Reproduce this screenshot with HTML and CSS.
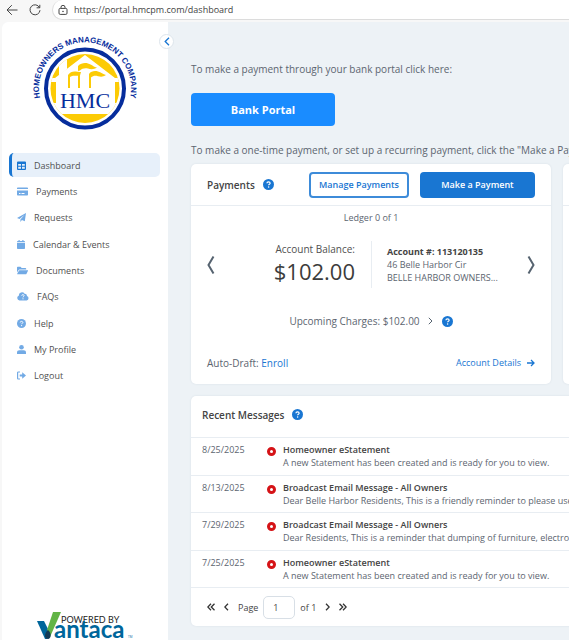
FILE: index.html
```html
<!DOCTYPE html>
<html lang="en">
<head>
    <meta charset="UTF-8">
    <meta name="viewport" content="width=device-width, initial-scale=1.0">
    <title>Dashboard</title>
    <link rel="stylesheet" href="styles.css">
</head>
<body>
    <svg class="symbols" width="0" height="0" aria-hidden="true">
        <symbol id="help" viewBox="0 0 16 16">
            <circle cx="8" cy="8" r="8" fill="currentColor"/>
            <path d="M5.700 6.200c0-1.300 1-2 2.300-2s2.400.8 2.400 2c0 1.500-2.200 1.500-2.200 3" fill="none" stroke="#fff" stroke-width="1.700"/>
            <circle cx="8.200" cy="11.600" r="1.100" fill="#fff"/>
        </symbol>
    </svg>

    <!-- Browser bar -->
    <div class="browser">
        <button class="nav-button" aria-label="Back">
            <svg width="12" height="12" viewBox="0 0 12 12"><path d="M11.500 6H1M5.800 1.200L1 6l4.800 4.800"/></svg>
        </button>
        <button class="nav-button" aria-label="Reload">
            <svg width="12" height="12" viewBox="0 0 12 12"><path d="M10.500 3.600A5 5 0 1 0 11 6.200M10.800.8v3H7.600"/></svg>
        </button>
        <div class="address">
            <svg width="10" height="10" viewBox="0 0 10 10"><rect x="1" y="3.400" width="8" height="6" rx="1.200"/><path d="M3 3.200V2.300a2 2 0 0 1 4 0v.9"/><circle cx="5" cy="6.400" r=".4"/></svg>
            <input type="text" aria-label="Address" value="https://portal.hmcpm.com/dashboard">
        </div>
    </div>

    <div class="layout">
        <!-- Sidebar -->
        <div class="sidebar">
            <button class="collapse" aria-label="Collapse menu">
                <svg width="6" height="9" viewBox="0 0 6 9"><path d="M5 .8L1.200 4.500 5 8.200"/></svg>
            </button>
            <svg class="logo" width="110" height="100" viewBox="0 0 110 100">
                <defs>
                    <path id="arc" d="M11.800 70.200A46 46 0 1 1 98.200 70.200"/>
                    <clipPath id="disc"><circle cx="55" cy="54.500" r="34.500"/></clipPath>
                </defs>
                <text class="logo-arc"><textPath href="#arc" startOffset="50%" text-anchor="middle">HOMEOWNERS MANAGEMENT COMPANY</textPath></text>
                <circle cx="55" cy="54.500" r="39" fill="#fff" stroke="#062d9c" stroke-width="4"/>
                <g clip-path="url(#disc)">
                    <path d="M20 18h70v76H20z" fill="#fccb05"/>
                    <path d="M55 21L25 44h-5v4h6v21h-6v11h70V69h-5V48h5v-4h-5z" fill="#fff"/>
                    <path d="M29 42V18h8v17z" fill="#fff"/>
                </g>
                <g fill="#fccb05">
                    <path d="M38 54V41c2-3 5-4 8-3.500 2 .3 3 .6 5 .5l-1 3.500c-3 1-7-1-10 1.500v11z"/>
                    <path d="M48 37V32c3-3 7-3.500 10-2.500 4 .8 5 3.500 9 4-3 2-6 2-9 1-3-.8-6-.2-8 2z"/>
                    <path d="M48 41h2v13h-2z"/>
                    <path d="M59 54V40c2-3 6-3.500 9-2.500 3 .8 5 3 8 3.500-3 2-5 2-8 1.200-3-.8-5-.4-7 1.300V54z"/>
                </g>
                <text class="logo-name" x="55" y="74" text-anchor="middle">HMC</text>
            </svg>
            <ul class="menu">
                <li><a class="active" href="#">
                    <svg width="9" height="9" viewBox="0 0 9 9"><path fill-rule="evenodd" d="M1 .5h7a1 1 0 0 1 1 1V8a1 1 0 0 1-1 1H1a1 1 0 0 1-1-1V1.500a1 1 0 0 1 1-1zM1.200 3v1.800H4V3zM5 3v1.800h2.800V3zM1.200 5.800v1.900H4V5.800zM5 5.800v1.900h2.800V5.800z"/></svg>
                    Dashboard</a></li>
                <li><a href="#">
                    <svg width="11" height="9" viewBox="0 0 11 9"><path fill-rule="evenodd" d="M.8.500h9.400a.8.8 0 0 1 .8.800V2H0v-.7A.8.800 0 0 1 .8.500zM0 3.500h11v4.300a.8.800 0 0 1-.8.800H.8a.8.800 0 0 1-.8-.8zM2 6v1h1.500V6zM4.500 6v1h3V6z"/></svg>
                    Payments</a></li>
                <li><a href="#">
                    <svg width="9" height="9" viewBox="0 0 9 9"><path d="M9 0L7.800 8.300 4.900 7.100 3.400 9V6.500L7.600 1.800 2.500 6.100 0 5.100z"/></svg>
                    Requests</a></li>
                <li><a href="#">
                    <svg width="8" height="9" viewBox="0 0 8 9"><path d="M1.500 0h1.200v1h2.600V0h1.200v1H7.200a.8.800 0 0 1 .8.800v.5H0v-.5A.8.800 0 0 1 .8 1h.7zM0 2.900h8v5.300a.8.800 0 0 1-.8.800H.8a.8.800 0 0 1-.8-.8z"/></svg>
                    Calendar &amp; Events</a></li>
                <li><a href="#">
                    <svg width="11" height="9" viewBox="0 0 11 9"><path d="M0 1.500A.8.800 0 0 1 .8.700h2.700l1.200 1.200h3.700a.8.800 0 0 1 .8.800v.7H2.500a1 1 0 0 0-.9.500L0 6.500zM2.600 4.200h8.100c.3 0 .4.200.3.500L9.400 7.900a.8.800 0 0 1-.7.400H.5c-.3 0-.4-.2-.3-.5L2 4.500a.7.700 0 0 1 .6-.3z"/></svg>
                    Documents</a></li>
                <li><a href="#">
                    <svg width="12" height="9" viewBox="0 0 12 9"><path d="M2.500 8.500A2.500 2.500 0 0 1 1.800 3.700 3.200 3.200 0 0 1 7.600 1.700a2 2 0 0 1 2.300 2.200 2.400 2.400 0 0 1-.2 4.600z"/><path d="M4.700 3.600c.1-1.300 2.500-1.200 2.400.1 0 .8-1.100.8-1.100 1.700M6 6.300v1" fill="none" stroke="#fff"/></svg>
                    FAQs</a></li>
                <li><a href="#">
                    <svg width="9" height="9"><use href="#help"/></svg>
                    Help</a></li>
                <li><a href="#">
                    <svg width="9" height="9" viewBox="0 0 9 9"><circle cx="4.500" cy="2.300" r="2.300"/><path d="M0 9V7.500C0 6 1 5.300 2.300 5.300h4.400C8 5.300 9 6 9 7.500V9z"/></svg>
                    My Profile</a></li>
                <li><a href="#">
                    <svg width="9" height="9" viewBox="0 0 9 9"><path d="M3 1H1.400A.8.800 0 0 0 .6 1.800v5.400a.8.800 0 0 0 .8.800H3" fill="none" stroke="currentColor" stroke-width="1.200"/><path d="M2.700 3.500h2.500V1.300L9 4.500 5.200 7.700V5.500H2.700z"/></svg>
                    Logout</a></li>
            </ul>
            <svg class="vantaca" width="98" height="28" viewBox="0 0 98 28">
                <path d="M0 9h7l6 12-3 6H8z" fill="#00669b"/>
                <path d="M16 0h8L13 25l-3-7z" fill="#62b446"/>
                <path d="M11 18c4 3 3 9 0 9-4 0-4-6 0-9z" fill="#123a55"/>
                <text class="powered" x="24" y="11">POWERED BY</text>
                <text class="vantaca-name" x="17" y="26">antaca</text>
                <text class="vantaca-tm" x="91" y="26">TM</text>
            </svg>
        </div>

        <!-- Content -->
        <div class="content">
            <p class="intro">To make a payment through your bank portal click here:</p>
            <button class="bank-portal">Bank Portal</button>
            <p class="intro">To make a one-time payment, or set up a recurring payment, click the "Make a Payment" button.</p>

            <div class="cards">
                <div class="card payments">
                    <div class="payments-header">
                        <h2>Payments</h2>
                        <svg class="help" width="11" height="11"><use href="#help"/></svg>
                        <div class="actions">
                            <button class="button outline">Manage Payments</button>
                            <button class="button">Make a Payment</button>
                        </div>
                    </div>
                    <p class="ledger">Ledger 0 of 1</p>
                    <div class="account">
                        <button class="arrow" aria-label="Previous ledger">
                            <svg width="8" height="20" viewBox="0 0 8 20"><path d="M6.500 1.500L1.500 10l5 8.500"/></svg>
                        </button>
                        <div class="balance">
                            <span>Account Balance:</span>
                            <strong>$102.00</strong>
                        </div>
                        <div class="details">
                            <b>Account #: 113120135</b>
                            <span>46 Belle Harbor Cir</span>
                            <span>BELLE HARBOR OWNERS...</span>
                        </div>
                        <button class="arrow" aria-label="Next ledger">
                            <svg width="8" height="20" viewBox="0 0 8 20"><path d="M1.500 1.500l5 8.500-5 8.500"/></svg>
                        </button>
                    </div>
                    <div class="upcoming">
                        <span>Upcoming Charges: $102.00</span>
                        <svg class="chevron" width="5" height="8" viewBox="0 0 5 8"><path d="M.8.800L4 4 .8 7.200"/></svg>
                        <svg class="help" width="11" height="11"><use href="#help"/></svg>
                    </div>
                    <div class="payments-footer">
                        <span>Auto-Draft: <a href="#">Enroll</a></span>
                        <a class="details-link" href="#">Account Details
                            <svg width="8" height="8" viewBox="0 0 8 8"><path d="M0 4h7M4 1l3 3-3 3"/></svg>
                        </a>
                    </div>
                </div>
                <div class="card next-card">
                    <div class="payments-header"></div>
                </div>
            </div>

            <div class="card messages">
                <div class="messages-header">
                    <h2>Recent Messages</h2>
                    <svg class="help" width="11" height="11"><use href="#help"/></svg>
                </div>
                <table>
                    <tr>
                        <td class="date">8/25/2025</td>
                        <td class="status"><span class="ring"></span></td>
                        <td><b>Homeowner eStatement</b><p>A new Statement has been created and is ready for you to view.</p></td>
                    </tr>
                    <tr>
                        <td class="date">8/13/2025</td>
                        <td class="status"><span class="ring"></span></td>
                        <td><b>Broadcast Email Message - All Owners</b><p>Dear Belle Harbor Residents, This is a friendly reminder to please use your</p></td>
                    </tr>
                    <tr>
                        <td class="date">7/29/2025</td>
                        <td class="status"><span class="ring"></span></td>
                        <td><b>Broadcast Email Message - All Owners</b><p>Dear Residents, This is a reminder that dumping of furniture, electronics</p></td>
                    </tr>
                    <tr>
                        <td class="date">7/25/2025</td>
                        <td class="status"><span class="ring"></span></td>
                        <td><b>Homeowner eStatement</b><p>A new Statement has been created and is ready for you to view.</p></td>
                    </tr>
                </table>
                <div class="pager">
                    <button aria-label="First page"><svg width="8" height="8" viewBox="0 0 8 8"><path d="M4 .8L.8 4 4 7.200M7.500.8L4.300 4l3.200 3.200"/></svg></button>
                    <button aria-label="Previous page"><svg width="5" height="8" viewBox="0 0 5 8"><path d="M4 .8L.8 4 4 7.200"/></svg></button>
                    <label for="page">Page</label>
                    <input id="page" type="text" value="1">
                    <span>of 1</span>
                    <button aria-label="Next page"><svg width="5" height="8" viewBox="0 0 5 8"><path d="M1 .8L4.200 4 1 7.200"/></svg></button>
                    <button aria-label="Last page"><svg width="8" height="8" viewBox="0 0 8 8"><path d="M.5.8L3.700 4 .5 7.200M4 .8L7.200 4 4 7.200"/></svg></button>
                </div>
            </div>
        </div>
    </div>
</body>
</html>
```
FILE: styles.css
```css
* {
    box-sizing: border-box;
}
body {
    display: flex;
    flex-direction: column;
    min-height: 100vh;
    margin: 0;
    overflow-x: hidden;
    font-family: "Open Sans", "Noto Sans", sans-serif;
    font-size: 9px;
    color: #5c6570;
    background-color: #f7f7f7;
}
button {
    padding: 0;
    border: none;
    background: none;
    font-family: inherit;
    cursor: pointer;
}
svg {
    display: block;
    flex-shrink: 0;
}
.symbols {
    position: absolute;
}
a {
    color: #1976d2;
    text-decoration: none;
}
p, h2 {
    margin: 0;
}
h2 {
    font-size: 10px;
    font-weight: 600;
    color: #444;
}
.help {
    margin-left: 8px;
    color: #1976d2;
}

/* Browser bar */
.browser {
    display: flex;
    height: 22px;
    padding-left: 6px;
}
.nav-button {
    width: 12px;
    height: 19px;
    margin-right: 11px;
}
.nav-button svg, .address svg {
    fill: none;
    stroke: #444;
    stroke-width: 1;
}
.address {
    display: flex;
    flex: 1;
    align-items: center;
    height: 20px;
    padding-left: 5px;
    border: 1px solid #dcdcdc;
    border-width: 0 0 1px 1px;
    border-radius: 10px 0 0 10px;
    background-color: #fff;
}
.address input {
    flex: 1;
    padding: 0 0 0 6px;
    border: none;
    outline: none;
    font-family: inherit;
    font-size: 9px;
    color: #444;
    background: none;
}

.layout {
    display: flex;
    flex: 1;
    margin-left: 2px;
    border-radius: 6px 0 0 0;
    background-color: #edf2f6;
}

/* Sidebar */
.sidebar {
    position: relative;
    display: flex;
    flex-direction: column;
    flex-shrink: 0;
    width: 166px;
    border-radius: 6px 0 0 0;
    background-color: #fff;
}
.collapse {
    position: absolute;
    top: 12px;
    right: -6px;
    display: flex;
    align-items: center;
    justify-content: center;
    width: 15px;
    height: 15px;
    border: 1px solid #dde5ec;
    border-radius: 50%;
    background-color: #fff;
}
.collapse svg {
    fill: none;
    stroke: #1976d2;
    stroke-width: 1.3;
}
.logo {
    margin: 12px 0 0 28px;
}
.logo-arc {
    font-family: "Liberation Sans", Arial, sans-serif;
    font-size: 8px;
    font-weight: bold;
    fill: #062d9c;
}
.logo-name {
    font-family: "Liberation Serif", serif;
    font-size: 22px;
    fill: #062d9c;
}
.menu {
    display: grid;
    grid-auto-rows: 1fr;
    min-height: 237px;
    margin: 19px 8px 20px 7px;
    padding: 0;
    list-style: none;
}
.menu a {
    display: flex;
    align-items: center;
    gap: 8px;
    height: 24px;
    padding-left: 5px;
    border-left: 3px solid transparent;
    border-radius: 5px;
    color: #505050;
}
.menu svg {
    fill: #72aae5;
    color: #72aae5;
}
.menu .active {
    border-left-color: #1976d2;
    background-color: #e7f0fa;
}
.menu .active svg {
    fill: #1976d2;
}
.vantaca {
    margin: auto 0 0 35px;
}
.powered {
    font-family: Lato, sans-serif;
    font-size: 9px;
    fill: #222;
}
.vantaca-name {
    font-family: Lato, sans-serif;
    font-size: 24px;
    font-weight: bold;
    fill: #00669b;
}
.vantaca-tm {
    font-size: 3px;
    fill: #00669b;
}

/* Content */
.content {
    flex: 1;
    min-width: 0;
    padding: 39px 0 14px 23px;
    overflow: hidden;
}
.intro {
    font-size: 10px;
    line-height: 16px;
    white-space: nowrap;
}
.bank-portal {
    display: block;
    width: 144px;
    height: 33px;
    margin: 16px 0;
    border-radius: 4px;
    background-color: #1a8cff;
    color: #fff;
    font-size: 11px;
    font-weight: 700;
}
.cards {
    display: flex;
    gap: 12px;
    margin: 6px 0 12px;
}
.card {
    border-radius: 5px;
    background-color: #fff;
    box-shadow: 0 0 2px #d5dde5;
}
.payments, .next-card {
    flex: 1 0 360px;
}
.payments-header {
    display: flex;
    align-items: center;
    height: 42px;
    padding: 0 16px;
    border-bottom: 1px solid #e8edf2;
}
.actions {
    display: flex;
    gap: 11px;
    margin-left: auto;
}
.button {
    width: 115px;
    height: 26px;
    border-radius: 4px;
    background-color: #1976d2;
    color: #fff;
    font-size: 9px;
    font-weight: 600;
}
.button.outline {
    width: 100px;
    border: 2px solid #3d8bd9;
    background-color: #fff;
    color: #1976d2;
}
.ledger {
    line-height: 24px;
    text-align: center;
}
.account {
    display: flex;
    align-items: center;
    padding: 11px 16px 0;
}
.arrow svg, .chevron {
    fill: none;
    stroke: #566370;
    stroke-width: 2;
}
.chevron {
    margin: 0 1px 0 8px;
    stroke-width: 1;
}
.balance {
    width: 157px;
    height: 47px;
    padding-right: 16px;
    border-right: 1px solid #e8edf2;
    text-align: right;
    font-size: 10px;
    line-height: 17px;
    white-space: nowrap;
    color: #505050;
}
.balance strong {
    display: block;
    font-size: 22px;
    font-weight: normal;
    line-height: 26px;
    color: #3c3c3c;
}
.details {
    flex: 1;
    padding-left: 15px;
    line-height: 13px;
}
.details b, .details span {
    display: block;
}
.details b {
    font-weight: 700;
    color: #444;
}
.upcoming {
    display: flex;
    align-items: center;
    justify-content: center;
    margin-top: 25px;
    font-size: 10px;
    line-height: 16px;
}
.payments-footer {
    display: flex;
    align-items: center;
    justify-content: space-between;
    padding: 26px 16px 13px;
    font-size: 10px;
    line-height: 16px;
}
.details-link {
    display: flex;
    align-items: center;
    gap: 6px;
    font-size: 9px;
}
.details-link svg {
    fill: none;
    stroke: #1976d2;
    stroke-width: 1.3;
}

/* Messages */
.messages-header {
    display: flex;
    align-items: center;
    height: 41px;
    padding: 0 0 4px 11px;
}
.messages {
    width: 732px;
}
table {
    width: 100%;
    height: 150px;
    border-collapse: collapse;
}
td {
    padding: 0;
    border-top: 1px solid #e8edf2;
    line-height: 13px;
    vertical-align: middle;
    white-space: nowrap;
}
td b {
    font-weight: 600;
    color: #444;
}
.date {
    width: 76px;
    padding: 5px 0 0 11px;
    vertical-align: top;
}
.status {
    width: 16px;
    padding-top: 9px;
    vertical-align: top;
}
.ring {
    display: block;
    width: 9px;
    height: 9px;
    border: 3px solid #d51317;
    border-radius: 50%;
}
.pager {
    display: flex;
    align-items: center;
    height: 39px;
    padding-left: 16px;
    border-top: 1px solid #e8edf2;
    color: #444;
}
.pager svg {
    fill: none;
    stroke: #333;
    stroke-width: 1.3;
}
.pager button {
    margin-right: 9px;
}
.pager input {
    width: 32px;
    height: 23px;
    margin: 0 5px;
    padding: 0 9px;
    border: 1px solid #d8dfe6;
    border-radius: 5px;
    font-family: inherit;
    font-size: 9px;
    color: #444;
}
.pager span {
    margin-right: 9px;
}
```
